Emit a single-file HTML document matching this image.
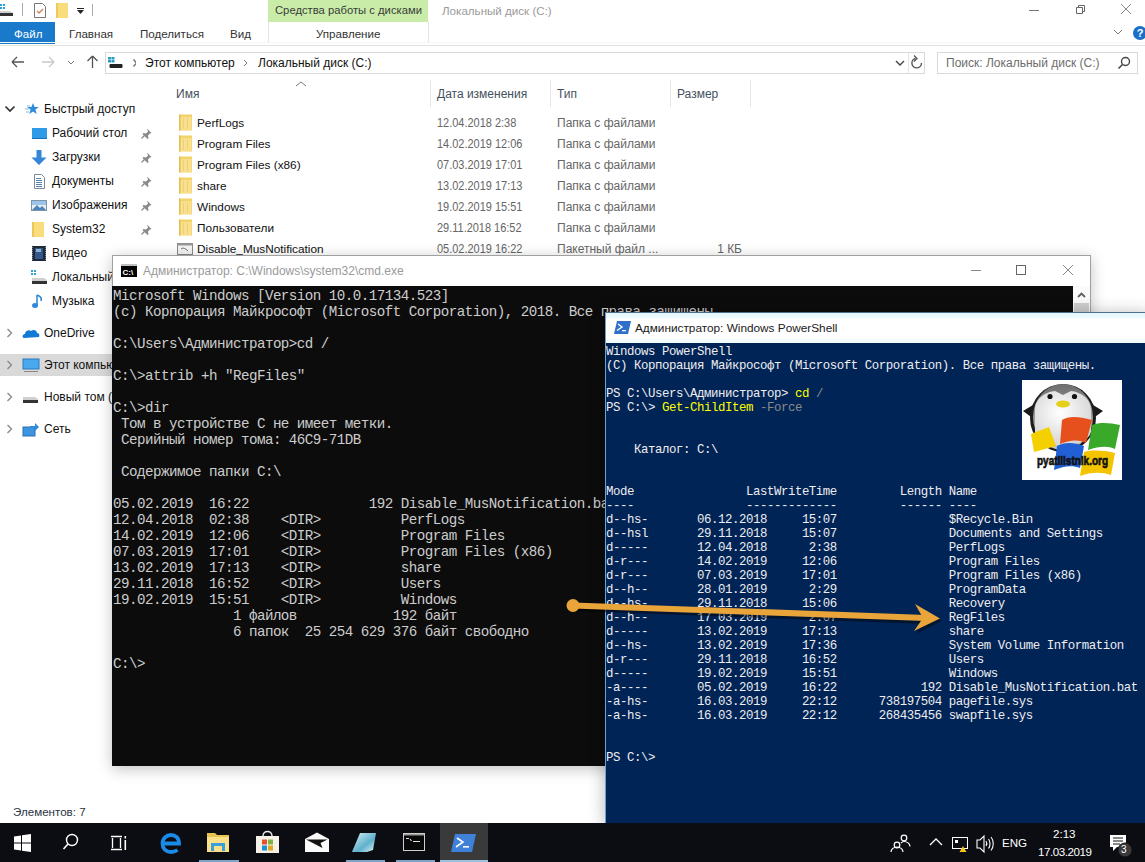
<!DOCTYPE html>
<html><head><meta charset="utf-8">
<style>
*{margin:0;padding:0;box-sizing:border-box}
html,body{width:1145px;height:862px;overflow:hidden;background:#fff;font-family:"Liberation Sans",sans-serif;font-size:12px;color:#000;position:relative}
.a{position:absolute;white-space:pre;line-height:14px}
#cmd{position:absolute;left:112px;top:255px;width:979px;height:511px;background:#fff;border:1px solid #a0a0a0;box-shadow:0 3px 14px rgba(0,0,0,0.24)}
#cmdbody{position:absolute;left:-1px;top:30px;width:962px;height:480px;background:#0c0c0c}
#cmdtxt{position:absolute;left:0;top:32px;font-family:"Liberation Mono",monospace;font-size:14.2px;letter-spacing:-0.52px;line-height:16px;color:#cccccc;white-space:pre}
#ps{position:absolute;left:605px;top:312px;width:545px;height:511px;background:linear-gradient(#e2f6fb 0,#eefafd 5px,#fff 6px,#fff 25px,#f2fbfd 27px);border:1px solid #6fa0d0;border-top-color:#4f6f8f;box-shadow:0 2px 16px rgba(0,0,0,0.3)}
#psbody{position:absolute;left:0;top:30px;width:560px;height:480px;background:#012456}
#pstxt{position:absolute;left:0;top:32px;font-family:"Liberation Mono",monospace;font-size:12.4px;letter-spacing:-0.44px;line-height:14px;color:#eeedf0;white-space:pre}
#pstxt .y{color:#ffff00} #pstxt .g{color:#8a8a8a}
#taskbar{position:absolute;left:0;top:823px;width:1145px;height:39px;background:#0c0d12}
</style></head><body>
<div class="a" style="left:268px;top:0;width:160px;height:22px;background:#c9eda9"></div>
<div class="a" style="left:268px;top:22px;width:1px;height:21px;background:#dfe8d8"></div>
<div class="a" style="left:428px;top:22px;width:1px;height:21px;background:#dfe8d8"></div>
<div class="a" style="left:275px;top:3px;color:#3a3a3a;font-size:11.25px;">Средства работы с дисками</div>
<div class="a" style="left:442px;top:4px;color:#9a9a9a;font-size:11.6px;">Локальный диск (C:)</div>
<svg class="a" style="left:0;top:0" width="100" height="22" viewBox="0 0 100 22"><rect x="0" y="4" width="2" height="2" fill="#2aa3d8"/><rect x="3" y="4" width="2" height="2" fill="#2aa3d8"/><rect x="0" y="7" width="2" height="2" fill="#2aa3d8"/><rect x="3" y="7" width="2" height="2" fill="#2aa3d8"/><path d="M0 11h10l3 2v3H0z" fill="#cfcfcf"/><rect x="0" y="13" width="13" height="3" fill="#333"/><rect x="22" y="3" width="1" height="13" fill="#aaa"/><path d="M34.5 3.5h8l3 3v11h-11z" fill="#fff" stroke="#777"/><path d="M37 11l2 2 4-4" fill="none" stroke="#d08050" stroke-width="1.3"/><rect x="56" y="3" width="12" height="15" fill="#f9dc7c"/><rect x="56" y="3" width="2" height="15" fill="#f0c85a"/><rect x="77" y="8" width="7" height="1" fill="#222"/><path d="M77 10h7l-3.5 4z" fill="#222"/><rect x="92" y="4" width="1" height="12" fill="#aaa"/></svg>
<div class="a" style="left:1029px;top:10px;width:10px;height:1px;background:#777"></div>
<svg class="a" style="left:1074px;top:4px" width="12" height="12" viewBox="0 0 12 12"><path d="M2.5 3.5h6v6h-6z M4.5 3.5v-2h6v6h-2" fill="none" stroke="#666"/></svg>
<svg class="a" style="left:1120px;top:3px" width="12" height="12" viewBox="0 0 12 12"><path d="M1 1L11 11M11 1L1 11" stroke="#888" stroke-width="1"/></svg>
<svg class="a" style="left:1113px;top:29px" width="10" height="6" viewBox="0 0 10 6"><path d="M1 1l4 4 4-4" fill="none" stroke="#777"/></svg>
<div class="a" style="left:1133px;top:26px;width:14px;height:14px;border-radius:7px;background:#1a6fc9;color:#fff;font-weight:bold;font-size:11px;line-height:14px;text-align:center">?</div>
<div class="a" style="left:0;top:22px;width:55px;height:22px;background:#1979ca"></div>
<div class="a" style="left:14px;top:27px;color:#fff;font-size:11.6px;">Файл</div>
<div class="a" style="left:69px;top:27px;color:#333;font-size:11.6px;">Главная</div>
<div class="a" style="left:140px;top:27px;color:#333;font-size:11.6px;">Поделиться</div>
<div class="a" style="left:230px;top:27px;color:#333;font-size:11.6px;">Вид</div>
<div class="a" style="left:316px;top:27px;color:#333;font-size:11.6px;">Управление</div>
<div class="a" style="left:0;top:45px;width:1145px;height:1px;background:#e2e2e2"></div><div class="a" style="left:0;top:42px;width:1145px;height:1px;background:#f6f6f6"></div>
<svg class="a" style="left:0;top:50px" width="105" height="26" viewBox="0 0 105 26"><path d="M12 12h12M12 12l5-5M12 12l5 5" fill="none" stroke="#555" stroke-width="1.3"/><path d="M42 12h12M54 12l-5-5M54 12l-5 5" fill="none" stroke="#c8c8c8" stroke-width="1.3"/><path d="M68 11l3 3 3-3" fill="none" stroke="#777" stroke-width="1"/><path d="M92.5 18V6M92.5 6l-5 5M92.5 6l5 5" fill="none" stroke="#555" stroke-width="1.3"/></svg>
<div class="a" style="left:105px;top:52px;width:820px;height:22px;border:1px solid #d9d9d9"></div>
<div class="a" style="left:908px;top:53px;width:1px;height:20px;background:#e4e4e4"></div>
<svg class="a" style="left:106px;top:53px" width="30" height="20" viewBox="0 0 30 20"><rect x="2" y="4" width="3" height="2.5" fill="#2a9cc0"/><rect x="5.5" y="4" width="3" height="2.5" fill="#2a9cc0"/><rect x="2" y="7" width="3" height="2.5" fill="#2a9cc0"/><rect x="5.5" y="7" width="3" height="2.5" fill="#2a9cc0"/><rect x="3.5" y="11" width="13" height="4" rx="1" fill="#222"/><path d="M27.5 6.5l3 3.5-3 3.5" fill="none" stroke="#777" stroke-width="1.5"/></svg>
<div class="a" style="left:145px;top:56px;color:#111;font-size:12px;">Этот компьютер</div>
<svg class="a" style="left:240px;top:53px" width="12" height="20" viewBox="0 0 12 20"><path d="M4 7l3 3-3 3" fill="none" stroke="#777"/></svg>
<div class="a" style="left:258px;top:56px;color:#111;font-size:12px;">Локальный диск (C:)</div>
<svg class="a" style="left:894px;top:53px" width="12" height="20" viewBox="0 0 12 20"><path d="M2 8l4 4 4-4" fill="none" stroke="#444" stroke-width="1.4"/></svg>
<svg class="a" style="left:909px;top:54px" width="16" height="18" viewBox="0 0 16 18"><path d="M12.5 9A4.8 4.8 0 1 1 6.5 4.4" fill="none" stroke="#555" stroke-width="1.4"/><path d="M5 1.5l3 3-3 3" fill="none" stroke="#555" stroke-width="1.3"/></svg>
<div class="a" style="left:937px;top:52px;width:201px;height:22px;border:1px solid #d9d9d9"></div>
<div class="a" style="left:946px;top:56px;color:#6d6d6d;font-size:12px;">Поиск: Локальный диск (C:)</div>
<svg class="a" style="left:1116px;top:55px" width="16" height="16" viewBox="0 0 16 16"><circle cx="9.5" cy="6.5" r="4" fill="none" stroke="#444" stroke-width="1.4"/><path d="M6.5 9.5L2.5 13.5" stroke="#444" stroke-width="1.6"/></svg>
<svg class="a" style="left:295px;top:80px" width="12" height="8" viewBox="0 0 12 8"><path d="M1 6l5-4 5 4" fill="none" stroke="#777"/></svg>
<div class="a" style="left:176px;top:87px;color:#45505e;font-size:12px;">Имя</div>
<div class="a" style="left:437px;top:87px;color:#45505e;font-size:12px;">Дата изменения</div>
<div class="a" style="left:557px;top:87px;color:#45505e;font-size:12px;">Тип</div>
<div class="a" style="left:677px;top:87px;color:#45505e;font-size:12px;">Размер</div>
<div class="a" style="left:430px;top:80px;width:1px;height:27px;background:#e5e5e5"></div>
<div class="a" style="left:550px;top:80px;width:1px;height:27px;background:#e5e5e5"></div>
<div class="a" style="left:670px;top:80px;width:1px;height:27px;background:#e5e5e5"></div>
<div class="a" style="left:750px;top:80px;width:1px;height:27px;background:#e5e5e5"></div>
<svg class="a" style="left:179px;top:114px" width="14" height="17" viewBox="0 0 14 17"><rect x="0" y="0.5" width="13" height="16" fill="#f1d36a"/><rect x="1.5" y="3" width="11" height="13" fill="#f9e08e"/><rect x="0" y="0.5" width="1.5" height="16" fill="#e3bf55"/><rect x="4" y="4" width="1" height="11" fill="#ecd07a"/><rect x="8" y="4" width="1" height="11" fill="#ecd07a"/></svg>
<div class="a" style="left:197px;top:116px;color:#111;font-size:11.8px;">PerfLogs</div>
<div class="a" style="left:437px;top:116px;color:#666;font-size:12.4px;transform:scaleX(0.885);transform-origin:0 0">12.04.2018 2:38</div>
<div class="a" style="left:557px;top:116px;color:#666;font-size:12px;">Папка с файлами</div>
<svg class="a" style="left:179px;top:135px" width="14" height="17" viewBox="0 0 14 17"><rect x="0" y="0.5" width="13" height="16" fill="#f1d36a"/><rect x="1.5" y="3" width="11" height="13" fill="#f9e08e"/><rect x="0" y="0.5" width="1.5" height="16" fill="#e3bf55"/><rect x="4" y="4" width="1" height="11" fill="#ecd07a"/><rect x="8" y="4" width="1" height="11" fill="#ecd07a"/></svg>
<div class="a" style="left:197px;top:137px;color:#111;font-size:11.8px;">Program Files</div>
<div class="a" style="left:437px;top:137px;color:#666;font-size:12.4px;transform:scaleX(0.885);transform-origin:0 0">14.02.2019 12:06</div>
<div class="a" style="left:557px;top:137px;color:#666;font-size:12px;">Папка с файлами</div>
<svg class="a" style="left:179px;top:156px" width="14" height="17" viewBox="0 0 14 17"><rect x="0" y="0.5" width="13" height="16" fill="#f1d36a"/><rect x="1.5" y="3" width="11" height="13" fill="#f9e08e"/><rect x="0" y="0.5" width="1.5" height="16" fill="#e3bf55"/><rect x="4" y="4" width="1" height="11" fill="#ecd07a"/><rect x="8" y="4" width="1" height="11" fill="#ecd07a"/></svg>
<div class="a" style="left:197px;top:158px;color:#111;font-size:11.8px;">Program Files (x86)</div>
<div class="a" style="left:437px;top:158px;color:#666;font-size:12.4px;transform:scaleX(0.885);transform-origin:0 0">07.03.2019 17:01</div>
<div class="a" style="left:557px;top:158px;color:#666;font-size:12px;">Папка с файлами</div>
<svg class="a" style="left:179px;top:177px" width="14" height="17" viewBox="0 0 14 17"><rect x="0" y="0.5" width="13" height="16" fill="#f1d36a"/><rect x="1.5" y="3" width="11" height="13" fill="#f9e08e"/><rect x="0" y="0.5" width="1.5" height="16" fill="#e3bf55"/><rect x="4" y="4" width="1" height="11" fill="#ecd07a"/><rect x="8" y="4" width="1" height="11" fill="#ecd07a"/></svg>
<div class="a" style="left:197px;top:179px;color:#111;font-size:11.8px;">share</div>
<div class="a" style="left:437px;top:179px;color:#666;font-size:12.4px;transform:scaleX(0.885);transform-origin:0 0">13.02.2019 17:13</div>
<div class="a" style="left:557px;top:179px;color:#666;font-size:12px;">Папка с файлами</div>
<svg class="a" style="left:179px;top:198px" width="14" height="17" viewBox="0 0 14 17"><rect x="0" y="0.5" width="13" height="16" fill="#f1d36a"/><rect x="1.5" y="3" width="11" height="13" fill="#f9e08e"/><rect x="0" y="0.5" width="1.5" height="16" fill="#e3bf55"/><rect x="4" y="4" width="1" height="11" fill="#ecd07a"/><rect x="8" y="4" width="1" height="11" fill="#ecd07a"/></svg>
<div class="a" style="left:197px;top:200px;color:#111;font-size:11.8px;">Windows</div>
<div class="a" style="left:437px;top:200px;color:#666;font-size:12.4px;transform:scaleX(0.885);transform-origin:0 0">19.02.2019 15:51</div>
<div class="a" style="left:557px;top:200px;color:#666;font-size:12px;">Папка с файлами</div>
<svg class="a" style="left:179px;top:219px" width="14" height="17" viewBox="0 0 14 17"><rect x="0" y="0.5" width="13" height="16" fill="#f1d36a"/><rect x="1.5" y="3" width="11" height="13" fill="#f9e08e"/><rect x="0" y="0.5" width="1.5" height="16" fill="#e3bf55"/><rect x="4" y="4" width="1" height="11" fill="#ecd07a"/><rect x="8" y="4" width="1" height="11" fill="#ecd07a"/></svg>
<div class="a" style="left:197px;top:221px;color:#111;font-size:11.8px;">Пользователи</div>
<div class="a" style="left:437px;top:221px;color:#666;font-size:12.4px;transform:scaleX(0.885);transform-origin:0 0">29.11.2018 16:52</div>
<div class="a" style="left:557px;top:221px;color:#666;font-size:12px;">Папка с файлами</div>
<svg class="a" style="left:177px;top:241px" width="16" height="16" viewBox="0 0 16 16"><rect x="0.5" y="2.5" width="15" height="11" fill="#f4f4f4" stroke="#888"/><rect x="0.5" y="2.5" width="15" height="2" fill="#999"/><path d="M4 8c2-2 5 0 7 2" stroke="#666" fill="none"/></svg>
<div class="a" style="left:197px;top:242px;color:#111;font-size:11.8px;">Disable_MusNotification</div>
<div class="a" style="left:437px;top:242px;color:#666;font-size:12.4px;transform:scaleX(0.885);transform-origin:0 0">05.02.2019 16:22</div>
<div class="a" style="left:557px;top:242px;color:#666;font-size:12px;">Пакетный файл ...</div>
<div class="a" style="left:690px;top:242px;width:52px;text-align:right;color:#666;font-size:12px">1 КБ</div>
<svg class="a" style="left:4px;top:104px" width="12" height="10" viewBox="0 0 12 10"><path d="M1.5 2.5l4.5 4.5 4.5-4.5" fill="none" stroke="#333" stroke-width="1.7"/></svg>
<svg class="a" style="left:24px;top:102px" width="16" height="14" viewBox="0 0 16 14"><path d="M9 1l1.6 4h4.2l-3.4 2.6 1.3 4.4L9 9.4 5.3 12l1.3-4.4L3.2 5h4.2z" fill="#2f8ad8"/><path d="M1 7h4M2 10h3M3 4h3" stroke="#7ab8ec" stroke-width="1.2"/></svg>
<div class="a" style="left:44px;top:102px;color:#111;font-size:12px;">Быстрый доступ</div>
<svg class="a" style="left:31px;top:125px" width="17" height="17" viewBox="0 0 17 17"><rect x="1" y="3" width="15" height="11" fill="#2f9be6"/><rect x="1" y="13" width="15" height="1" fill="#1a6fb8"/></svg>
<div class="a" style="left:52px;top:126px;color:#111;font-size:12px;">Рабочий стол</div>
<svg class="a" style="left:140px;top:127px" width="13" height="13" viewBox="0 0 13 13"><path d="M7 1.5l4.5 4.5-1.5 0.5-2 2 0.5 2.5-1 1-5-5 1-1 2.5 0.5 2-2z" fill="#8a8a8a"/><path d="M4.5 8.5L1.5 11.5" stroke="#8a8a8a" stroke-width="1.2"/></svg>
<svg class="a" style="left:31px;top:149px" width="17" height="17" viewBox="0 0 17 17"><path d="M5.5 1h5v7.5h5l-7.5 7.5-7.5-7.5h5z" fill="#3586d8"/></svg>
<div class="a" style="left:52px;top:150px;color:#111;font-size:12px;">Загрузки</div>
<svg class="a" style="left:140px;top:151px" width="13" height="13" viewBox="0 0 13 13"><path d="M7 1.5l4.5 4.5-1.5 0.5-2 2 0.5 2.5-1 1-5-5 1-1 2.5 0.5 2-2z" fill="#8a8a8a"/><path d="M4.5 8.5L1.5 11.5" stroke="#8a8a8a" stroke-width="1.2"/></svg>
<svg class="a" style="left:31px;top:173px" width="17" height="17" viewBox="0 0 17 17"><path d="M3.5 1.5h7l3 3v11h-10z" fill="#fff" stroke="#7a8a9a"/><path d="M5 5.5h5M5 7.5h6M5 9.5h6M5 11.5h6M5 13.5h6" stroke="#5a80b0"/></svg>
<div class="a" style="left:52px;top:174px;color:#111;font-size:12px;">Документы</div>
<svg class="a" style="left:140px;top:175px" width="13" height="13" viewBox="0 0 13 13"><path d="M7 1.5l4.5 4.5-1.5 0.5-2 2 0.5 2.5-1 1-5-5 1-1 2.5 0.5 2-2z" fill="#8a8a8a"/><path d="M4.5 8.5L1.5 11.5" stroke="#8a8a8a" stroke-width="1.2"/></svg>
<svg class="a" style="left:31px;top:197px" width="17" height="17" viewBox="0 0 17 17"><rect x="0.5" y="3.5" width="15" height="10" fill="#e8eef4" stroke="#8094a8"/><path d="M1 13l5-5 3 3 2-2 4 4z" fill="#4a84b8"/><rect x="1" y="4" width="14" height="4" fill="#9cc3e8"/></svg>
<div class="a" style="left:52px;top:198px;color:#111;font-size:12px;">Изображения</div>
<svg class="a" style="left:140px;top:199px" width="13" height="13" viewBox="0 0 13 13"><path d="M7 1.5l4.5 4.5-1.5 0.5-2 2 0.5 2.5-1 1-5-5 1-1 2.5 0.5 2-2z" fill="#8a8a8a"/><path d="M4.5 8.5L1.5 11.5" stroke="#8a8a8a" stroke-width="1.2"/></svg>
<svg class="a" style="left:31px;top:221px" width="17" height="17" viewBox="0 0 17 17"><rect x="1" y="1" width="12" height="15" fill="#f9dc7c"/><rect x="1" y="1" width="2" height="15" fill="#edc55a"/></svg>
<div class="a" style="left:52px;top:222px;color:#111;font-size:12px;">System32</div>
<svg class="a" style="left:140px;top:223px" width="13" height="13" viewBox="0 0 13 13"><path d="M7 1.5l4.5 4.5-1.5 0.5-2 2 0.5 2.5-1 1-5-5 1-1 2.5 0.5 2-2z" fill="#8a8a8a"/><path d="M4.5 8.5L1.5 11.5" stroke="#8a8a8a" stroke-width="1.2"/></svg>
<svg class="a" style="left:31px;top:245px" width="17" height="17" viewBox="0 0 17 17"><rect x="1" y="1" width="14" height="15" fill="#1e2a3a"/><rect x="4" y="3" width="8" height="11" fill="#34568a"/><rect x="5" y="4" width="5" height="3" fill="#8fb0d0"/><path d="M1.5 2v13M14.5 2v13" stroke="#889" stroke-width="1" stroke-dasharray="1 1"/></svg>
<div class="a" style="left:52px;top:246px;color:#111;font-size:12px;">Видео</div>
<svg class="a" style="left:31px;top:269px" width="17" height="17" viewBox="0 0 17 17"><rect x="0" y="1" width="2" height="2" fill="#2aa3d8"/><rect x="3" y="1" width="2" height="2" fill="#2aa3d8"/><rect x="0" y="4" width="2" height="2" fill="#2aa3d8"/><rect x="3" y="4" width="2" height="2" fill="#2aa3d8"/><path d="M1 9h12l3 2v4H1z" fill="#d0d0d0"/><rect x="1" y="12" width="15" height="3" fill="#333"/></svg>
<div class="a" style="left:52px;top:270px;color:#111;font-size:12px;">Локальный</div>
<svg class="a" style="left:31px;top:293px" width="17" height="17" viewBox="0 0 17 17"><path d="M6 2v10" stroke="#2f8ad8" stroke-width="1.6"/><ellipse cx="4" cy="12.5" rx="3" ry="2.5" fill="#2f8ad8"/><path d="M6 2c3 1 5 3 4 6" fill="none" stroke="#2f8ad8" stroke-width="1.6"/></svg>
<div class="a" style="left:52px;top:294px;color:#111;font-size:12px;">Музыка</div>
<div class="a" style="left:0;top:354px;width:180px;height:22px;background:#d9d9d9"></div>
<svg class="a" style="left:5px;top:327px" width="10" height="12" viewBox="0 0 10 12"><path d="M2.5 2l4 4-4 4" fill="none" stroke="#888" stroke-width="1.3"/></svg>
<svg class="a" style="left:22px;top:325px" width="19" height="17" viewBox="0 0 19 17"><path d="M2 13c-2 0-2-4 1-4 0-3 4-5 6-3 2-2 6-1 6 2 2 0 3 2 2 4z" fill="#1479d4"/></svg>
<div class="a" style="left:44px;top:326px;color:#111;font-size:12px;">OneDrive</div>
<svg class="a" style="left:5px;top:359px" width="10" height="12" viewBox="0 0 10 12"><path d="M2.5 2l4 4-4 4" fill="none" stroke="#888" stroke-width="1.3"/></svg>
<svg class="a" style="left:22px;top:357px" width="19" height="17" viewBox="0 0 19 17"><rect x="1" y="2" width="16" height="10" fill="#4aa8ee" stroke="#2a7ac0"/><rect x="2" y="14" width="14" height="1" fill="#888"/></svg>
<div class="a" style="left:44px;top:358px;color:#111;font-size:12px;">Этот компьютер</div>
<svg class="a" style="left:5px;top:391px" width="10" height="12" viewBox="0 0 10 12"><path d="M2.5 2l4 4-4 4" fill="none" stroke="#888" stroke-width="1.3"/></svg>
<svg class="a" style="left:22px;top:389px" width="19" height="17" viewBox="0 0 19 17"><path d="M1 8h12l3 2v4H1z" fill="#d0d0d0"/><rect x="1" y="11" width="15" height="3" fill="#333"/></svg>
<div class="a" style="left:44px;top:390px;color:#111;font-size:12px;">Новый том (D:)</div>
<svg class="a" style="left:5px;top:423px" width="10" height="12" viewBox="0 0 10 12"><path d="M2.5 2l4 4-4 4" fill="none" stroke="#888" stroke-width="1.3"/></svg>
<svg class="a" style="left:22px;top:421px" width="19" height="17" viewBox="0 0 19 17"><rect x="1" y="6" width="12" height="9" fill="#3d95e0" stroke="#2a70b8"/><path d="M8 5h5V2l4 4-4 4V7H8z" fill="#2f8ad8"/></svg>
<div class="a" style="left:44px;top:422px;color:#111;font-size:12px;">Сеть</div>
<div class="a" style="left:13px;top:805px;color:#2b3444;font-size:11.6px;">Элементов: 7</div>

<div id="cmd">
  <svg class="a" style="left:8px;top:8px" width="16" height="13" viewBox="0 0 16 13"><rect x="0" y="0" width="16" height="13" fill="#000"/><rect x="0" y="0" width="16" height="2" fill="#c0c0c0"/><text x="1.5" y="10.5" font-family="Liberation Sans" font-weight="bold" font-size="8" fill="#fff">C:\</text></svg>
  <div class="a" style="left:30px;top:8px;color:#9a9a9a;font-size:12px">Администратор: C:\Windows\system32\cmd.exe</div>
  <div class="a" style="left:858px;top:14px;width:10px;height:1px;background:#888"></div>
  <div class="a" style="left:903px;top:9px;width:10px;height:10px;border:1px solid #666"></div>
  <svg class="a" style="left:949px;top:8px" width="12" height="12" viewBox="0 0 12 12"><path d="M1 1L11 11M11 1L1 11" stroke="#888" stroke-width="1"/></svg>
  <div id="cmdbody"></div>
  <div class="a" style="left:960px;top:30px;width:17px;height:479px;background:#fafafa"></div>
  <svg class="a" style="left:963px;top:34px" width="11" height="10" viewBox="0 0 11 10"><path d="M2 7l3.5-3.5L9 7" fill="none" stroke="#606060" stroke-width="1.8"/></svg>
  <div class="a" style="left:961px;top:47px;width:15px;height:460px;background:#cfcfcf"></div>
  <div id="cmdtxt">Microsoft Windows [Version 10.0.17134.523]
(c) Корпорация Майкрософт (Microsoft Corporation), 2018. Все права защищены.

C:\Users\Администратор&gt;cd /

C:\&gt;attrib +h &quot;RegFiles&quot;

C:\&gt;dir
 Том в устройстве C не имеет метки.
 Серийный номер тома: 46C9-71DB

 Содержимое папки C:\

05.02.2019  16:22               192 Disable_MusNotification.bat
12.04.2018  02:38    &lt;DIR&gt;          PerfLogs
14.02.2019  12:06    &lt;DIR&gt;          Program Files
07.03.2019  17:01    &lt;DIR&gt;          Program Files (x86)
13.02.2019  17:13    &lt;DIR&gt;          share
29.11.2018  16:52    &lt;DIR&gt;          Users
19.02.2019  15:51    &lt;DIR&gt;          Windows
               1 файлов            192 байт
               6 папок  25 254 629 376 байт свободно

C:\&gt;</div>
</div>


<div id="ps">
  <svg class="a" style="left:8px;top:8px" width="17" height="13" viewBox="0 0 17 13"><path d="M3 0h14l-3 13H0z" fill="#2f6fcc"/><path d="M4 3l4 3-5 3.5" fill="none" stroke="#fff" stroke-width="1.4"/><rect x="8" y="9" width="4" height="1.3" fill="#fff"/></svg>
  <div class="a" style="left:29px;top:8px;color:#1a1a1a;font-size:11.8px">Администратор: Windows PowerShell</div>
  <div id="psbody"></div>
  <div id="pstxt">Windows PowerShell
(C) Корпорация Майкрософт (Microsoft Corporation). Все права защищены.

PS C:\Users\Администратор&gt; <span class="y">cd</span> <span class="g">/</span>
PS C:\&gt; <span class="y">Get-ChildItem</span> <span class="g">-Force</span>


    Каталог: C:\


Mode                LastWriteTime         Length Name
----                -------------         ------ ----
d--hs-       06.12.2018     15:07                $Recycle.Bin
d--hsl       29.11.2018     15:07                Documents and Settings
d-----       12.04.2018      2:38                PerfLogs
d-r---       14.02.2019     12:06                Program Files
d-r---       07.03.2019     17:01                Program Files (x86)
d--h--       28.01.2019      2:29                ProgramData
d--hs-       29.11.2018     15:06                Recovery
d--h--       17.03.2019      2:07                RegFiles
d-----       13.02.2019     17:13                share
d--hs-       13.02.2019     17:36                System Volume Information
d-r---       29.11.2018     16:52                Users
d-----       19.02.2019     15:51                Windows
-a----       05.02.2019     16:22            192 Disable_MusNotification.bat
-a-hs-       16.03.2019     22:12      738197504 pagefile.sys
-a-hs-       16.03.2019     22:12      268435456 swapfile.sys


PS C:\&gt;</div>
</div>

<svg class="a" style="left:1022px;top:380px" width="100" height="100" viewBox="0 0 100 100">
<defs><linearGradient id="hg" x1="0" y1="0" x2="0" y2="1"><stop offset="0" stop-color="#6e6e6e"/><stop offset="1" stop-color="#c8c8c8"/></linearGradient>
<radialGradient id="bg" cx="0.45" cy="0.4" r="0.6"><stop offset="0" stop-color="#ffffff"/><stop offset="1" stop-color="#d6d6d6"/></radialGradient></defs>
<rect width="100" height="100" fill="#fff"/>
<path d="M1 31L16 22 16 42z" fill="#1a1a1a"/><path d="M81 31L66 22 66 42z" fill="#1a1a1a"/>
<ellipse cx="41" cy="38" rx="33" ry="34" fill="#1c1c1c"/>
<ellipse cx="41" cy="37" rx="30" ry="33" fill="url(#hg)"/>
<path d="M13 30C13 18 24 12 33 11L41 15 49 11C58 12 69 18 69 30L69 52C64 70 18 70 13 52z" fill="url(#bg)"/>
<circle cx="28" cy="16.5" r="2.6" fill="#111"/><circle cx="52.5" cy="16.5" r="2.6" fill="#111"/>
<ellipse cx="41" cy="24" rx="7" ry="3.4" fill="#e6cf1a"/>
<path d="M9 54L27 47 34 66 12 72z" fill="#f4d000"/>
<path d="M40 40C46 36 56 36 70 40L64 63C56 59 48 60 38 64z" fill="#e5501d"/>
<path d="M70 45C78 42 88 43 98 45L93 69C86 66 78 66 66 70z" fill="#3aa92a"/>
<path d="M35 66C42 62 52 62 62 66L58 88C50 85 42 86 32 90z" fill="#2060d4"/>
<path d="M62 72C70 70 80 70 93 73L89 95C80 92 70 92 58 96z" fill="#f4c400"/>
<text x="50.5" y="84.5" text-anchor="middle" font-family="Liberation Sans" font-weight="bold" font-size="13" fill="#111" stroke="#111" stroke-width="0.7" textLength="71" lengthAdjust="spacingAndGlyphs">pyatilistnik.org</text>
</svg>
<svg class="a" style="left:0;top:0" width="1145" height="862" viewBox="0 0 1145 862">
<path d="M574 608L928 621" stroke="rgba(0,0,0,0.45)" stroke-width="6" fill="none"/><path d="M917 607L942 621 916 634 925 621z" fill="rgba(0,0,0,0.4)"/>
<path d="M573 605.5L926 618" stroke="#e9a43a" stroke-width="6.2" fill="none"/>
<circle cx="573" cy="605.5" r="6.5" fill="#e9a43a"/>
<path d="M915 604L940 618.5 914 631 923 618z" fill="#e9a43a"/>
</svg>
<div id="taskbar"></div>
<svg class="a" style="left:0;top:823px" width="1145" height="39" viewBox="0 0 1145 39">
<rect x="440" y="0" width="48" height="39" fill="#3a3a3a"/>
<rect x="346" y="37" width="39" height="2" fill="#7da4c8"/>
<rect x="396" y="37" width="39" height="2" fill="#7da4c8"/>
<rect x="440" y="37" width="48" height="2" fill="#9ac0e0"/>
<rect x="199" y="37" width="40" height="2" fill="#7da4c8"/>
<path d="M14 13.5l7-1v7h-7zM22 12.3l9-1.3v8.5h-9zM14 20.5h7v7l-7-1zM22 20.5h9V29l-9-1.3z" fill="#fff"/>
<circle cx="72" cy="17" r="5.5" fill="none" stroke="#fff" stroke-width="1.4"/><path d="M68 21l-4.5 5" stroke="#fff" stroke-width="1.6"/>
<path d="M111 13.5h11M111 26.5h11M112.5 15v10M120.5 15v10" fill="none" stroke="#fff" stroke-width="1.3"/><rect x="124.5" y="13" width="1.6" height="2.5" fill="#fff"/><rect x="124.5" y="17" width="1.6" height="10" fill="#fff"/>
<path d="M163 20.5h16c0-5.5-3.5-8.5-8-8.5s-8.5 3.5-8.5 8.5 3.5 8.5 8.5 8.5c3 0 5-1 6.5-2" fill="none" stroke="#1a8be6" stroke-width="3.8"/>
<path d="M207 10h8l2 2h12v17h-22z" fill="#e8c455"/><rect x="207" y="14" width="22" height="15" fill="#fbe08a"/><path d="M211 20h14v8h-3v-5h-8v5h-3z" fill="#3aa0dc"/>
<path d="M263 13c0-6 9-6 9 0" fill="none" stroke="#eee" stroke-width="1.4"/><rect x="256" y="13" width="23" height="17" fill="#f6f2ea"/><rect x="262" y="16.5" width="5" height="5" fill="#e8502a"/><rect x="268" y="16.5" width="5" height="5" fill="#7cb342"/><rect x="262" y="22.5" width="5" height="5" fill="#1f8fd8"/><rect x="268" y="22.5" width="5" height="5" fill="#e0a820"/>
<path d="M305 16l12-6.5 12 6.5v13h-24z" fill="#fafafa"/><path d="M306 16.5h21.5l-7 3.5 2 5z" fill="#111"/>
<defs><linearGradient id="npg" x1="0" y1="0" x2="1" y2="1"><stop offset="0" stop-color="#d8f2fa"/><stop offset="0.6" stop-color="#5fb0cc"/><stop offset="1" stop-color="#eaf6fa"/></linearGradient></defs><path d="M360 10h16l-3 17-6 2h-15z" fill="url(#npg)"/>
<rect x="403.5" y="10.5" width="21" height="17" fill="#080808" stroke="#cfcfcf" stroke-width="1"/><rect x="404" y="11" width="20" height="1.5" fill="#9a9a9a"/><path d="M406 15.5h3M410 16l1.5 2M413 18.5h7" stroke="#e0e0e0" stroke-width="1.1"/>
<path d="M455 11h21l-4 18h-21z" fill="#3f80d8"/><path d="M457 15l6 4-7 5" fill="none" stroke="#fff" stroke-width="1.6"/><rect x="463" y="23" width="6" height="1.6" fill="#fff"/>
<circle cx="897" cy="22" r="2.8" fill="none" stroke="#fff" stroke-width="1.2"/><path d="M891 29c0-3 3-5 6-5s6 2 6 5" fill="none" stroke="#fff" stroke-width="1.2"/><circle cx="904" cy="15" r="2.8" fill="none" stroke="#fff" stroke-width="1.2"/><path d="M901 20c1-1 2-1.5 3-1.5 3 0 6 2 6 5" fill="none" stroke="#fff" stroke-width="1.2"/>
<path d="M930 22l6-6 6 6" fill="none" stroke="#fff" stroke-width="1.3"/>
<rect x="952.5" y="14.5" width="15" height="11" fill="none" stroke="#fff"/><rect x="955" y="17" width="3" height="3" fill="#fff"/><path d="M963 23l3.5 6h-7z" fill="#f5c518"/>
<path d="M977 17h3l4-4v16l-4-4h-3z" fill="none" stroke="#fff" stroke-width="1.1"/><path d="M986 18c1 1.5 1 3.5 0 5M988.5 16c2 2.5 2 7 0 9.5M991 14c3 3.5 3 10 0 13.5" fill="none" stroke="#fff" stroke-width="1.1"/>
<path d="M1110 12h16v12h-9l-4 4v-4h-3z" fill="#fff"/><path d="M1113 15h10M1113 18h10M1113 21h7" stroke="#111" stroke-width="1"/>
<circle cx="1125" cy="27" r="7" fill="#3a3a3a" stroke="#111" stroke-width="1"/>
</svg>
<div class="a" style="left:1002px;top:836px;color:#fff;font-size:11.6px">ENG</div>
<div class="a" style="left:1053px;top:827px;color:#fff;font-size:11.6px">2:13</div>
<div class="a" style="left:1038px;top:845px;color:#fff;font-size:11.6px;letter-spacing:-0.45px">17.03.2019</div>
<div class="a" style="left:1121px;top:843px;color:#fff;font-size:10px">3</div>

</body></html>
